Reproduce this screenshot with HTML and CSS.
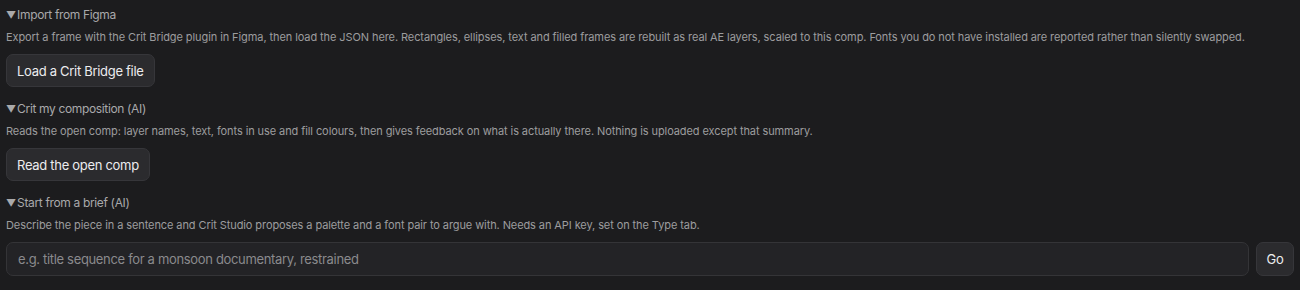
FILE: index.html
```html
<!DOCTYPE html>
<html lang="en">
<head>
    <meta charset="UTF-8">
    <title>Crit Studio</title>
    <link rel="stylesheet" href="styles.css">
</head>
<body>
    <details class="section" open>
        <summary><span class="tri">▼</span>Import from Figma</summary>
        <p class="desc">Export a frame with the Crit Bridge plugin in Figma, then load the JSON here. Rectangles, ellipses, text and filled frames are rebuilt as real AE layers, scaled to this comp. Fonts you do not have installed are reported rather than silently swapped.</p>
        <button class="btn" type="button">Load a Crit Bridge file</button>
    </details>
    <details class="section" open>
        <summary><span class="tri">▼</span>Crit my composition (AI)</summary>
        <p class="desc">Reads the open comp: layer names, text, fonts in use and fill colours, then gives feedback on what is actually there. Nothing is uploaded except that summary.</p>
        <button class="btn" type="button">Read the open comp</button>
    </details>
    <details class="section" open>
        <summary><span class="tri">▼</span>Start from a brief (AI)</summary>
        <p class="desc">Describe the piece in a sentence and Crit Studio proposes a palette and a font pair to argue with. Needs an API key, set on the Type tab.</p>
        <div class="brief_row">
            <input class="brief_input" type="text" placeholder="e.g. title sequence for a monsoon documentary, restrained">
            <button class="btn go" type="button">Go</button>
        </div>
    </details>
</body>
</html>
```

FILE: styles.css
```css
body{
    margin: 0;
    padding: 6px;
    background-color: #1c1c1e;
    font-family: Inter, "Liberation Sans", sans-serif;
    color: #a6a6a8;
}

.section{
    margin-bottom: 13px;
}

summary{
    display: flex;
    align-items: center;
    height: 18px;
    list-style: none;
    font-size: 12px;
    line-height: 18px;
    letter-spacing: -0.35px;
    color: #a9a9ab;
    cursor: pointer;
}
summary::-webkit-details-marker{
    display: none;
}

.tri{
    font-size: 10px;
    line-height: 10px;
    margin-right: 1px;
    letter-spacing: 0;
}

.desc{
    margin: 5px 0 9px 0;
    font-size: 11px;
    line-height: 16px;
    letter-spacing: -0.09px;
    color: #9c9c9e;
}

.btn{
    height: 33px;
    padding: 0 10px;
    background-color: #2b2b2e;
    border: 1px solid #36363a;
    border-radius: 7px;
    color: #ececee;
    font-family: Inter, "Liberation Sans", sans-serif;
    font-size: 13px;
    letter-spacing: -0.3px;
    cursor: pointer;
}

.brief_row{
    display: flex;
    gap: 7px;
}

.brief_input{
    flex: 1;
    height: 34px;
    box-sizing: border-box;
    padding: 0 11px;
    background-color: #232326;
    border: 1px solid #343437;
    border-radius: 7px;
    color: #ececee;
    font-family: Inter, "Liberation Sans", sans-serif;
    font-size: 13px;
    letter-spacing: -0.33px;
    outline: none;
}
.brief_input::placeholder{
    color: #8a8a8d;
}

.go{
    height: 34px;
    width: 38px;
    padding: 0;
}
```
